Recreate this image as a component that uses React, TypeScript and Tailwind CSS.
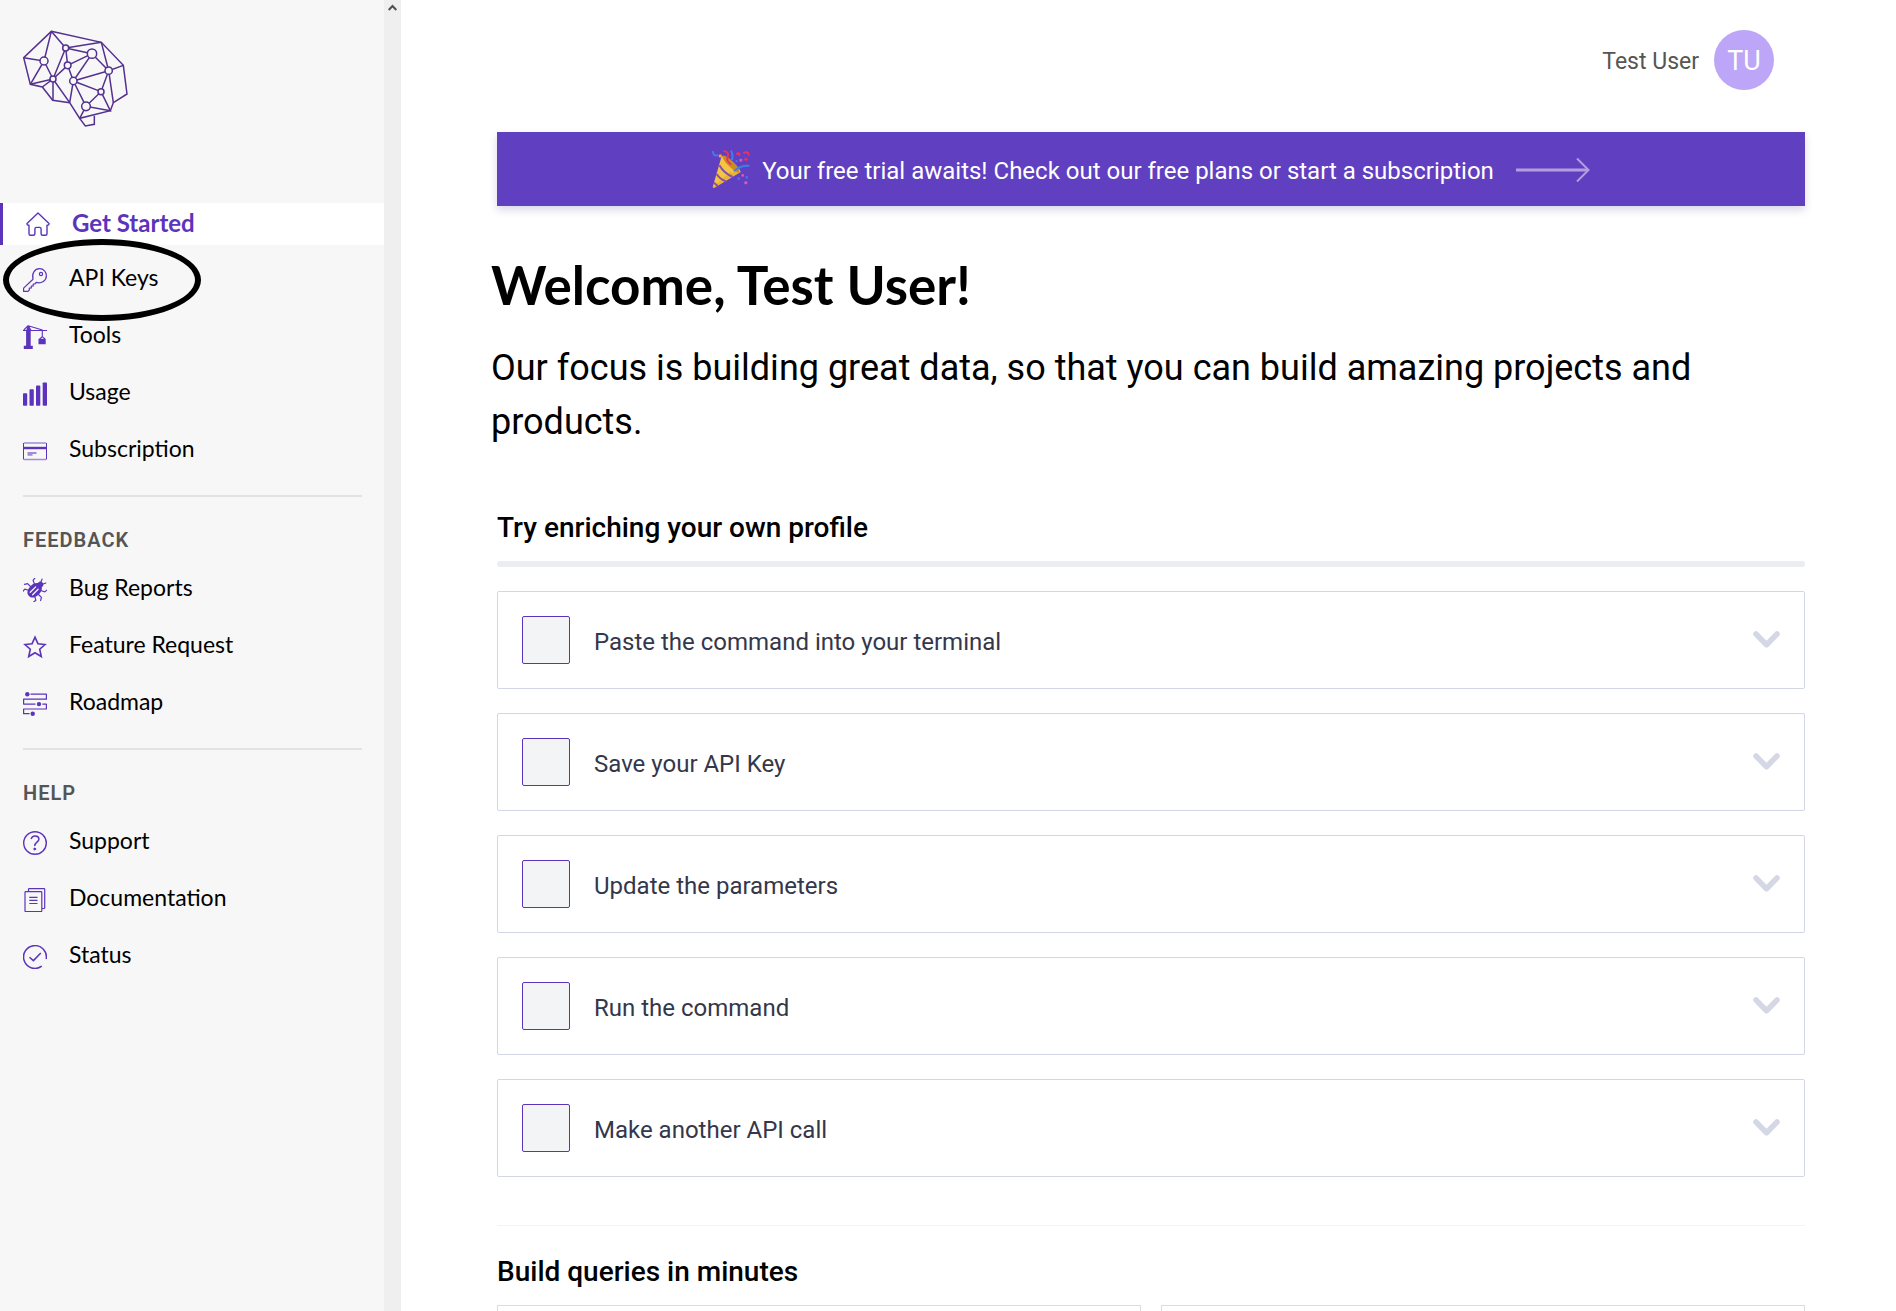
import type { ReactNode } from "react";

const svgProps = {
  width: 24,
  height: 24,
  viewBox: "0 0 24 24",
  fill: "none",
  stroke: "currentColor",
  "aria-hidden": true,
  className: "block shrink-0 text-[#5b34bb]",
} as const;

const HomeIcon = () => (
  <svg {...svgProps} strokeWidth="1.4" strokeLinejoin="round">
    <path d="M12 .9 1 11.4Q.7 13.4 3 13.2V21.7Q3 23.2 4.5 23.2H7.4Q8.9 23.2 8.9 21.7V17Q8.9 15.4 10.5 15.4H13.6Q15.1 15.4 15.1 17V21.7Q15.1 23.2 16.6 23.2H19.5Q21 23.2 21 21.7V13.2Q23.3 13.4 23 11.4Z" />
  </svg>
);

const KeyIcon = () => (
  <svg {...svgProps} strokeWidth="1.2" strokeLinejoin="round">
    <path d="M10 11.2C8.6 5.5 11.5.7 16.6.7C20.7.7 23.4 4 23.4 7.7C23.4 12.6 18.5 15.9 13.2 14.4L11.900 16H10.2V17.9L8.3 18.1V19.9L6.3 20.1V22L5 23.4H.6V20.1Z" />
    <circle cx="18" cy="6" r="1.6" />
  </svg>
);

const ToolsIcon = () => (
  <svg {...svgProps} strokeWidth="1.1">
    <path d="M0 5.5H24M.8 5 5 .8 8 5M5 .8 19.5 5M19.3 5V12M19.3 11.6 16.7 14M19.3 11.6 22 14" />
    <path fill="currentColor" stroke="none" d="M4.5 1H5.8L7.7 6V20.800H9.8V24H.8V20.800H3.1V6ZM15.5 13.800H22.700V19.3H15.5Z" />
  </svg>
);

const UsageIcon = () => (
  <svg {...svgProps} stroke="none" fill="currentColor">
    <rect x="0" y="11.3" width="4.2" height="12.4" rx=".8" />
    <rect x="6.5" y="7.3" width="4.3" height="16.4" rx=".8" />
    <rect x="13" y="3.6" width="4.3" height="20.1" rx=".8" />
    <rect x="19.7" y=".4" width="4.3" height="23.3" rx=".8" />
  </svg>
);

const SubscriptionIcon = () => (
  <svg {...svgProps} strokeWidth="1">
    <path strokeOpacity=".55" strokeWidth="1.5" d="M1 4H23M1 20.5H23" />
    <path d="M.5 4V20.5M23.5 4V20.5" />
    <path strokeWidth="2.4" d="M0 9H24" />
    <path strokeOpacity=".55" strokeWidth="1.8" d="M4.5 14H13.5M4.5 15.8H9.5" />
  </svg>
);

const BugIcon = () => (
  <svg {...svgProps} strokeWidth="1.2" strokeLinecap="round">
    <g transform="rotate(45 12 12)">
      <path fill="currentColor" stroke="none" d="M12 4.500C16 4.500 17.8 8 17.8 12.500C17.8 17.500 15.5 20.500 12 20.500C8.5 20.500 6.2 17.500 6.2 12.500C6.2 8 8 4.500 12 4.500Z" />
      <path fill="currentColor" stroke="none" d="M9 5.500C9 2.500 10 1.500 12 1.500C14 1.500 15 2.500 15 5.500Z" />
      <path d="M10.5 2 9.3-.6M13.5 2 14.7-.6M7 8 3.8 6.5 3.4 3.2M17 8 20.2 6.5 20.6 3.2M6 12.7H2.2L.6 15.5M18 12.7H21.8L23.4 15.5M7 17 4.2 18.6 4.4 21.8M17 17 19.8 18.6 19.6 21.8" />
      <path stroke="#f7f7f7" strokeWidth="1.3" d="M10.3 9.3V17M13.7 9.3V17" />
    </g>
  </svg>
);

const StarIcon = () => (
  <svg {...svgProps} strokeWidth="1.6">
    <path d="M12 2.2 14.9 8.7 22 9.5 16.7 14.2 18.3 21.5 12 17.7 5.7 21.5 7.3 14.2 2 9.5 9.1 8.7Z" />
  </svg>
);

const RoadmapIcon = () => (
  <svg {...svgProps} strokeWidth="1.2" strokeLinejoin="round">
    <path d="M7.5 2.2H23.4V7.2H.6V12.1H12.5M19.3 12.1H23.4V17H.6V21.7H6.5" />
    <g fill="currentColor" stroke="none">
      <circle cx="4.3" cy="2.3" r="2.2" />
      <circle cx="16" cy="12.1" r="2.2" />
      <circle cx="9.7" cy="21.7" r="2.2" />
    </g>
  </svg>
);

const SupportIcon = () => (
  <svg {...svgProps} strokeWidth="1.4" strokeLinecap="round">
    <circle cx="12" cy="12" r="11.3" />
    <path strokeWidth="1.5" d="M8.3 7.4C9 5.6 10.3 4.9 12.1 4.9C14.4 4.9 15.9 6.2 15.9 8.2C15.9 11 11.8 11.3 11.8 14.6" />
    <circle cx="11.7" cy="18" r="1" fill="currentColor" strokeWidth=".8" />
  </svg>
);

const DocumentationIcon = () => (
  <svg {...svgProps} strokeWidth="1.2">
    <rect x="2" y="3.6" width="16.8" height="20" rx=".8" />
    <path d="M5.5 3.5V1.3Q5.5.6 6.2.6H21Q21.7.6 21.7 1.3V19.8Q21.7 20.5 21 20.5H19" />
    <path d="M6.3 9.3H14.5M6.3 12.4H14.5M6.3 15.5H14.5" />
  </svg>
);

const StatusIcon = () => (
  <svg {...svgProps} strokeWidth="1.5">
    <path d="M23.2 14A11.4 11.4 0 1 0 18.7 21.2" />
    <path d="M6.5 12.2 10.4 15.6 17.8 8" />
  </svg>
);

function Logo() {
  return (
    <svg width="106" height="98" viewBox="25 29 318 294" fill="none" stroke="#54308f" strokeWidth="4.5" role="img" aria-label="Brain logo">
      <path d="M110 33 260 66 326 135 337 221 296 247 287 271 195 294 165 247 114 240 83 200 47 192 27 112Z" />
      <path d="M110 33 88 122M110 33 153 83M27 112 88 122 47 192M88 122 115 176M47 192 115 176M83 200 115 176V240M115 176 165 247M115 176 153 83M115 176 159 135M153 83 159 135M153 83 232 100M153 83 260 66M159 135 232 100M159 135 176 182M176 182 232 100M176 182 282 151M176 182 259 214M176 182 214 258M176 182 165 247M232 100 282 151M260 66 282 151 326 135M282 151 296 247M282 151 259 214 214 258M259 214 287 271 214 258 195 294M195 294 212 317 239 312V286" />
      <g fill="#f7f7f7">
        <circle cx="88" cy="122" r="12" />
        <circle cx="153" cy="83" r="9" />
        <circle cx="159" cy="135" r="10" />
        <circle cx="115" cy="176" r="9" />
        <circle cx="176" cy="182" r="11" />
        <circle cx="232" cy="100" r="14" />
        <circle cx="282" cy="151" r="11" />
        <circle cx="259" cy="214" r="9" />
        <circle cx="214" cy="258" r="13" />
      </g>
    </svg>
  );
}

function PartyPopper() {
  return (
    <svg width="38" height="38" viewBox="0 0 114 114" fill="none" aria-hidden="true" className="block shrink-0">
      <path fill="#f6c443" d="M2 112 28 22Q34 12 60 34Q84 56 86 66L10 112Q4 115 2 112Z" />
      <path fill="#d99a24" d="M2 112 60 60 86 66 10 112Q4 115 2 112Z" opacity=".4" />
      <path stroke="#8450ae" strokeWidth="6" d="M22 46Q36 70 62 81M14 72Q24 88 42 94M6 98 17 108" />
      <ellipse cx="57" cy="42" rx="9" ry="35" fill="#c98d22" transform="rotate(-45 57 42)" />
      <path stroke="#e8335f" strokeWidth="6" strokeLinecap="round" d="M37 4Q52 6 47 20T56 42M75 12Q82 4 82 16M96 8Q110 4 110 14" />
      <path stroke="#3d7fe6" strokeWidth="6" strokeLinecap="round" d="M3 5Q4 20 16 16M58 4Q64 18 60 28M68 62Q84 46 110 47" />
      <path stroke="#f6c443" strokeWidth="5" strokeLinecap="round" d="M46 52 62 66" />
      <g fill="#d55bb0">
        <rect x="82" y="26" width="9" height="9" rx="3" />
        <rect x="88" y="72" width="8" height="8" rx="3" />
        <rect x="97" y="94" width="9" height="9" rx="3" />
      </g>
      <g fill="#4a6ff0">
        <rect x="76" y="82" width="8" height="8" rx="3" />
        <rect x="100" y="78" width="8" height="8" rx="3" />
        <rect x="70" y="30" width="7" height="7" rx="3" />
      </g>
      <circle cx="25" cy="18" r="5" fill="#f3a73b" />
      <circle cx="102" cy="28" r="5" fill="#e8335f" />
    </svg>
  );
}

type Item = { label: string; icon: ReactNode; circled?: boolean };

const productItems: Item[] = [
  { label: "API Keys", icon: <KeyIcon />, circled: true },
  { label: "Tools", icon: <ToolsIcon /> },
  { label: "Usage", icon: <UsageIcon /> },
  { label: "Subscription", icon: <SubscriptionIcon /> },
];

const feedbackItems: Item[] = [
  { label: "Bug Reports", icon: <BugIcon /> },
  { label: "Feature Request", icon: <StarIcon /> },
  { label: "Roadmap", icon: <RoadmapIcon /> },
];

const helpItems: Item[] = [
  { label: "Support", icon: <SupportIcon /> },
  { label: "Documentation", icon: <DocumentationIcon /> },
  { label: "Status", icon: <StatusIcon /> },
];

const steps = [
  "Paste the command into your terminal",
  "Save your API Key",
  "Update the parameters",
  "Run the command",
  "Make another API call",
];

function NavList({ items }: { items: Item[] }) {
  return (
    <ul>
      {items.map((item) => (
        <li key={item.label} className="relative">
          <a href="#" className="flex h-[57px] items-center gap-[22px] pl-[23px] text-[23px] leading-7 text-black">
            {item.icon}
            <span className="pb-1.5">{item.label}</span>
          </a>
          {item.circled && (
            <span className="pointer-events-none absolute -top-3 left-[3px] h-[82px] w-[198px] rounded-[50%] border-[6px] border-black" />
          )}
        </li>
      ))}
    </ul>
  );
}

function NavSection({ title, items }: { title: string; items: Item[] }) {
  return (
    <section>
      <hr className="mt-4 mr-[22px] ml-[23px] border-t-2 border-[#e3e3e3]" />
      <h2 className="mt-7 mb-1.5 pl-[23px] font-['Roboto',sans-serif] text-xl leading-[30px] font-semibold tracking-wider text-[#555]">
        {title}
      </h2>
      <NavList items={items} />
    </section>
  );
}

export default function App() {
  return (
    <div className="flex h-screen overflow-hidden bg-white font-['Roboto',sans-serif]">
      <aside className="flex w-[401px] shrink-0 bg-[#f7f7f7] font-['Lato',sans-serif]">
        <div className="min-w-0 flex-1">
          <a href="#" className="mt-[30px] ml-[23px] block w-fit">
            <Logo />
          </a>
          <nav className="mt-[75px]">
            <a
              href="#"
              aria-current="page"
              className="mb-1.5 flex h-[42px] items-center gap-[22px] border-l-[3px] border-[#5b34bb] bg-white pl-[23px] text-2xl leading-7 font-bold text-[#5b34bb]"
            >
              <HomeIcon />
              <span className="pb-0.5">Get Started</span>
            </a>
            <NavList items={productItems} />
            <NavSection title="FEEDBACK" items={feedbackItems} />
            <NavSection title="HELP" items={helpItems} />
          </nav>
        </div>
        <div className="flex w-[17px] shrink-0 justify-center bg-[#efefef] pt-1">
          <svg width="9" height="7" viewBox="0 0 9 7" fill="none" stroke="#505050" strokeWidth="2" aria-hidden="true">
            <path d="M.7 6 4.5 2 8.3 6" />
          </svg>
        </div>
      </aside>

      <main className="min-w-0 flex-1 pt-[30px] pr-[91px] pl-[90px]">
        <header className="flex items-center justify-end gap-[15px] pr-[31px]">
          <span className="pt-1 text-[23px] leading-7 text-[#555]">Test User</span>
          <button type="button" className="flex size-[60px] items-center justify-center rounded-full bg-[#bda5f7] pt-0.5 text-[27px] leading-8 text-white">
            TU
          </button>
        </header>

        <a
          href="#"
          className="mt-[42px] ml-1.5 flex h-[74px] items-center justify-center bg-[#603fc0] text-2xl text-white shadow-[0_4px_8px_rgba(60,66,130,0.2)]"
        >
          <PartyPopper />
          <span className="ml-3 pt-1">Your free trial awaits! Check out our free plans or start a subscription</span>
          <svg width="74" height="26" viewBox="0 0 74 26" fill="none" stroke="#b19fe0" aria-hidden="true" className="ml-[22px] block shrink-0">
            <path strokeWidth="3" d="M0 14H72" />
            <path strokeWidth="2" d="M61 2.5 72.5 14 61 25.5" />
          </svg>
        </a>

        <h1 className="mt-[47px] font-['Lato',sans-serif] text-[53px] leading-[64px] font-bold text-black">Welcome, Test User!</h1>
        <p className="mt-6 text-4xl leading-[54px] text-black">
          Our focus is building great data, so that you can build amazing projects and products.
        </p>

        <section className="ml-1.5">
          <h2 className="mt-[61px] text-[28px] leading-9 font-medium text-black">Try enriching your own profile</h2>
          <div role="progressbar" aria-valuenow={0} aria-label="Steps completed" className="mt-[15px] h-1.5 rounded-full bg-[#ecedf2]" />
          <ul className="mt-6 flex flex-col gap-6">
            {steps.map((step) => (
              <li key={step} className="flex h-[98px] items-center rounded-xs border border-[#d3d6e4] px-6">
                <label className="flex flex-1 items-center gap-6 text-2xl text-[#34374a]">
                  <input type="checkbox" className="size-12 shrink-0 appearance-none rounded-xs border border-[#5b34bb] bg-[#f3f4f6] checked:bg-[#5b34bb]" />
                  <span className="pt-1">{step}</span>
                </label>
                <button type="button" aria-label={`Expand: ${step}`} className="pb-0.5">
                  <svg width="27" height="17" viewBox="0 0 27 17" fill="none" stroke="#d4d8e5" strokeWidth="5.5" strokeLinecap="round" strokeLinejoin="round" aria-hidden="true" className="block">
                    <path d="M3 3 13.5 13.7 24 3" />
                  </svg>
                </button>
              </li>
            ))}
          </ul>
        </section>

        <section className="ml-1.5">
          <hr className="mt-12 border-[#f3f3fc]" />
          <h2 className="mt-7 text-[28px] leading-9 font-medium text-black">Build queries in minutes</h2>
          <div className="mt-[15px] grid grid-cols-2 gap-5">
            <div className="h-48 border border-[#dcdce0]" />
            <div className="h-48 border border-[#dcdce0]" />
          </div>
        </section>
      </main>
    </div>
  );
}
